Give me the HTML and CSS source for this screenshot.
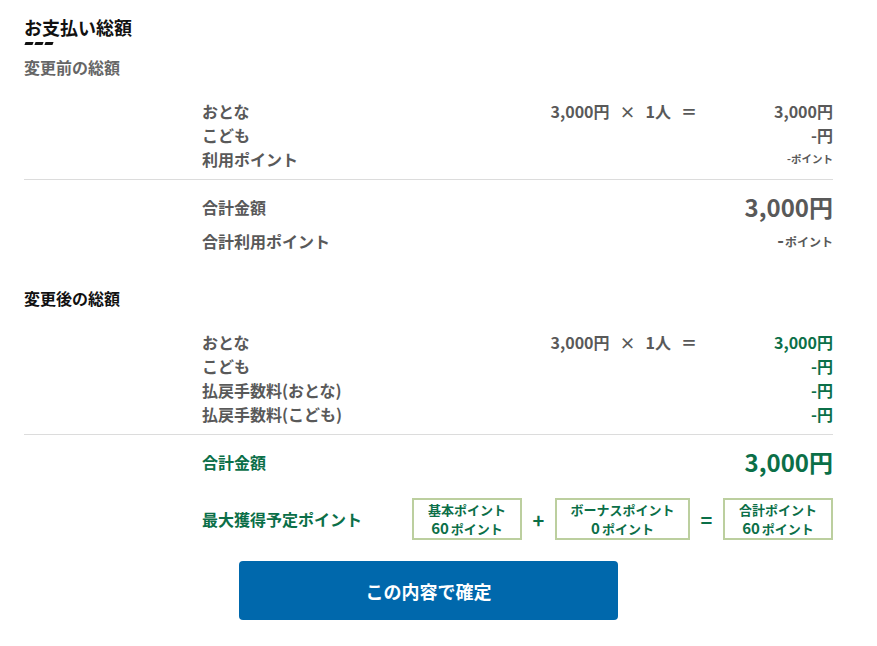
FILE: index.html
```html
<!DOCTYPE html>
<html lang="ja">
<head>
<meta charset="utf-8">
<title>お支払い総額</title>
<link rel="stylesheet" href="styles.css">
</head>
<body>
<main class="page">
  <h1 class="title">お支払い総額</h1>
  <div class="title-dash"><span></span><span></span><span></span></div>

  <section class="block">
    <h2 class="block-title muted">変更前の総額</h2>
    <div class="lines">
      <span class="label">おとな</span>
      <span class="calc"><span>3,000円</span><span>×</span><span>1人</span><span>＝</span></span>
      <span class="val">3,000円</span>
      <span class="label">こども</span><span></span>
      <span class="val">-円</span>
      <span class="label">利用ポイント</span><span></span>
      <span class="val pt-tiny">-ポイント</span>
    </div>
    <hr class="sep">
    <div class="sum">
      <span class="label">合計金額</span>
      <span class="big">3,000円</span>
    </div>
    <div class="sum-sub">
      <span class="label">合計利用ポイント</span>
      <span class="val"><span class="dash">-</span><span class="pt">ポイント</span></span>
    </div>
  </section>

  <section class="block block-after">
    <h2 class="block-title">変更後の総額</h2>
    <div class="lines">
      <span class="label">おとな</span>
      <span class="calc"><span>3,000円</span><span>×</span><span>1人</span><span>＝</span></span>
      <span class="val green">3,000円</span>
      <span class="label">こども</span><span></span>
      <span class="val green">-円</span>
      <span class="label">払戻手数料(おとな)</span><span></span>
      <span class="val green">-円</span>
      <span class="label">払戻手数料(こども)</span><span></span>
      <span class="val green">-円</span>
    </div>
    <hr class="sep">
    <div class="sum green">
      <span class="label">合計金額</span>
      <span class="big">3,000円</span>
    </div>
    <div class="points green">
      <span class="label">最大獲得予定ポイント</span>
      <div class="pbox pbox-narrow">基本ポイント<br><span class="num">60</span>ポイント</div>
      <span class="op">+</span>
      <div class="pbox pbox-wide">ボーナスポイント<br><span class="num">0</span>ポイント</div>
      <span class="op">=</span>
      <div class="pbox pbox-narrow">合計ポイント<br><span class="num">60</span>ポイント</div>
    </div>
  </section>

  <div class="actions">
    <button class="confirm" type="button">この内容で確定</button>
  </div>
</main>
</body>
</html>
```

FILE: styles.css
```css
* { box-sizing: border-box; }

body {
  margin: 0;
  background: #fff;
  font-family: "Noto Sans CJK JP", "Noto Sans", sans-serif;
  font-weight: 700;
  color: #595959;
}

.page {
  width: 877px;
  padding: 14px 44px 26px 24px;
}

.title {
  margin: 0;
  font-size: 18px;
  line-height: 27px;
  color: #111;
  font-weight: 700;
}

.title-dash {
  display: flex;
  gap: 2px;
  height: 3px;
  margin-left: 1px;
  margin-top: 1px;
}
.title-dash span {
  width: 8px;
  height: 3px;
  background: #111;
  transform: skewX(-20deg);
}

.block-title {
  margin: 10px 0 0;
  font-size: 16px;
  line-height: 24px;
  color: #111;
}
.block-title.muted { color: #666; }

.block-after .block-title { margin-top: 32px; }

.lines {
  display: grid;
  grid-template-columns: 1fr auto 136px;
  padding-left: 178px;
  margin-top: 20px;
  font-size: 16px;
  line-height: 24px;
}

.label { font-size: 16px; }

.calc {
  display: flex;
  gap: 10px;
  justify-content: flex-end;
}

.val { text-align: right; }

.pt-tiny { font-size: 10.5px; }

.green { color: #0b6f48; }

.sep {
  border: 0;
  border-top: 1px solid #dcdcdc;
  margin: 8px 0 0;
}

.sum {
  display: flex;
  justify-content: space-between;
  align-items: center;
  padding-left: 178px;
  margin-top: 9px;
  height: 36px;
  font-size: 16px;
}

.big {
  font-size: 24px;
  line-height: 36px;
}

.sum-sub {
  display: flex;
  justify-content: space-between;
  align-items: center;
  padding-left: 178px;
  margin-top: 2px;
  line-height: 24px;
}

.dash { font-size: 18px; margin-right: 1px; }
.pt { font-size: 12px; }

.points {
  display: flex;
  align-items: center;
  padding-left: 178px;
  margin-top: 18px;
}
.points .label { flex: 1; }

.pbox {
  height: 42px;
  border: 2px solid #bccf9f;
  font-size: 13px;
  line-height: 18px;
  padding-top: 1px;
  text-align: center;
}
.pbox-narrow { width: 110px; }
.pbox-wide { width: 135px; }
.pbox .num { font-size: 15px; margin-right: 2px; }

.op {
  width: 33px;
  text-align: center;
  font-size: 20px;
  font-weight: 700;
}

.actions {
  display: flex;
  justify-content: center;
  margin-top: 21px;
}

.confirm {
  width: 379px;
  height: 59px;
  border: 0;
  border-radius: 4px;
  background: #0068ac;
  color: #fff;
  font-family: "Noto Sans CJK JP", sans-serif;
  font-weight: 700;
  font-size: 18px;
}
```
